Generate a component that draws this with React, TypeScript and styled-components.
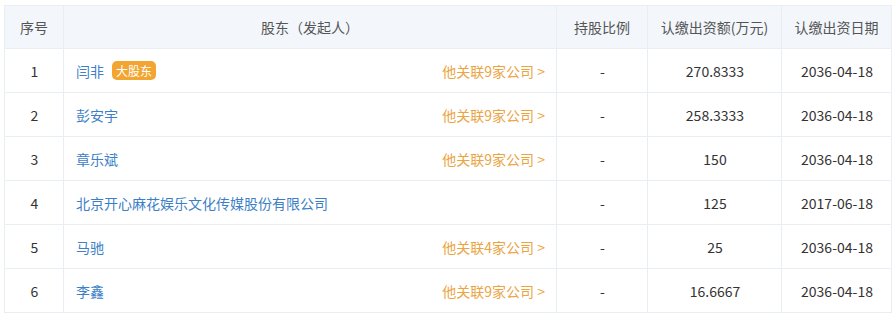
import styled, { createGlobalStyle } from 'styled-components';

const GlobalStyle = createGlobalStyle`
  body {
    margin: 0;
    background: #ffffff;
    font-family: "Noto Sans CJK SC", "Noto Sans", sans-serif;
  }
`;

const Wrap = styled.div`
  padding: 5px 4px 0 4px;
`;

const Table = styled.table`
  width: 887px;
  border-collapse: collapse;
  table-layout: fixed;
  font-size: 14px;
  color: #333333;
`;

const Th = styled.th`
  height: 42px;
  padding: 0;
  background: #f3f7fc;
  border: 1px solid #e9eef3;
  font-weight: normal;
  color: #555555;
  text-align: center;
`;

const Td = styled.td<{ $align?: string }>`
  height: 43px;
  padding: 0 11px 0 12px;
  border: 1px solid #e9eef3;
  text-align: ${(p) => p.$align || 'center'};
`;

const Holder = styled.div`
  display: flex;
  align-items: center;
  justify-content: space-between;
`;

const Name = styled.span`
  display: flex;
  align-items: center;
  gap: 8px;
  color: #3d7fc6;
`;

const Badge = styled.span`
  display: inline-flex;
  align-items: center;
  height: 19px;
  padding: 0 4px;
  border-radius: 5px;
  background: #f2a530;
  color: #ffffff;
  font-size: 12px;
`;

const Related = styled.span`
  color: #eba443;
`;

type Row = {
  name: string;
  major?: boolean;
  related?: number;
  amount: string;
  date: string;
};

const rows: Row[] = [
  { name: '闫非', major: true, related: 9, amount: '270.8333', date: '2036-04-18' },
  { name: '彭安宇', related: 9, amount: '258.3333', date: '2036-04-18' },
  { name: '章乐斌', related: 9, amount: '150', date: '2036-04-18' },
  { name: '北京开心麻花娱乐文化传媒股份有限公司', amount: '125', date: '2017-06-18' },
  { name: '马驰', related: 4, amount: '25', date: '2036-04-18' },
  { name: '李鑫', related: 9, amount: '16.6667', date: '2036-04-18' },
];

const widths = [59, 493, 91, 134, 110];

export default function App() {
  return (
    <>
      <GlobalStyle />
      <Wrap>
        <Table>
          <colgroup>
            {widths.map((w, i) => (
              <col key={i} style={{ width: w }} />
            ))}
          </colgroup>
          <thead>
            <tr>
              <Th>序号</Th>
              <Th>股东（发起人）</Th>
              <Th>持股比例</Th>
              <Th>认缴出资额(万元)</Th>
              <Th>认缴出资日期</Th>
            </tr>
          </thead>
          <tbody>
            {rows.map((r, i) => (
              <tr key={r.name}>
                <Td>{i + 1}</Td>
                <Td $align="left">
                  <Holder>
                    <Name>
                      {r.name}
                      {r.major && <Badge>大股东</Badge>}
                    </Name>
                    {r.related && <Related>他关联{r.related}家公司 &gt;</Related>}
                  </Holder>
                </Td>
                <Td>-</Td>
                <Td>{r.amount}</Td>
                <Td>{r.date}</Td>
              </tr>
            ))}
          </tbody>
        </Table>
      </Wrap>
    </>
  );
}
